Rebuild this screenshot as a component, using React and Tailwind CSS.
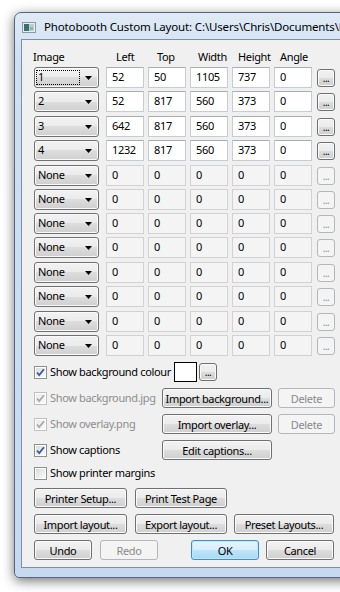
import React from "react";

const FONT = { fontFamily: '"Noto Sans", "Open Sans", Arial, sans-serif' };

function Btn({ children, className = "", disabled = false, def = false }) {
  let cls =
    "flex shrink-0 items-center justify-center whitespace-nowrap rounded-[3px] border text-[11px] leading-none ";
  if (def) {
    cls +=
      "border-[#3c8fd1] text-black bg-[linear-gradient(#e6f4fc_0%,#d7eefb_50%,#bfe4f8_50%,#a9d9f4_100%)] shadow-[inset_0_0_0_1px_#bfe6fb] ";
  } else if (disabled) {
    cls += "border-[#b3b7ba] text-[#8a8a8a] bg-[#f4f4f4] ";
  } else {
    cls +=
      "border-[#707070] text-black bg-[linear-gradient(#f2f2f2_0%,#ebebeb_50%,#dddddd_50%,#cfcfcf_100%)] shadow-[inset_0_0_0_1px_#fafafa] ";
  }
  return <div className={cls + className}>{children}</div>;
}

function Combo({ value, focus }) {
  return (
    <div className="relative flex h-[21px] w-[65px] shrink-0 items-center rounded-[3px] border border-[#707070] bg-[linear-gradient(#f2f2f2_0%,#ebebeb_50%,#dddddd_50%,#cfcfcf_100%)] shadow-[inset_0_0_0_1px_#fafafa] text-[11px]">
      {focus ? (
        <div className="ml-[1px] flex h-[15px] w-[44px] items-center border border-dotted border-black pl-[1px]">
          {value}
        </div>
      ) : (
        <div className="pl-[3px]">{value}</div>
      )}
      <svg className="absolute right-[6px] top-[8px]" width="7" height="4" viewBox="0 0 7 4">
        <path d="M0 0 H7 L3.5 4 Z" fill="#000" />
      </svg>
    </div>
  );
}

function Box({ v, disabled }) {
  return (
    <div
      className={
        "flex h-[21px] w-[38px] shrink-0 items-center border pl-[5px] text-[11px] " +
        (disabled
          ? "border-[#d2d2d2] bg-[#f4f4f4] text-black"
          : "border-[#c7cbd2] border-t-[#a9adb4] bg-white text-black")
      }
    >
      {v}
    </div>
  );
}

function Dots({ disabled }) {
  return (
    <Btn disabled={disabled} className="h-[18px] w-[18px] !items-end pb-[3px]">
      <span className="text-[10px] leading-none tracking-[-0.5px]">...</span>
    </Btn>
  );
}

function Check({ checked, disabled, label }) {
  return (
    <div className="flex items-center whitespace-nowrap">
      <svg className="shrink-0" width="13" height="13" viewBox="0 0 13 13">
        <defs>
          <linearGradient id={"cg" + (disabled ? "d" : "e")} x1="0" y1="0" x2="1" y2="1">
            <stop offset="0" stopColor={disabled ? "#ececec" : "#d8dbe0"} />
            <stop offset="1" stopColor={disabled ? "#f8f8f8" : "#fbfbfb"} />
          </linearGradient>
        </defs>
        <rect x="0.5" y="0.5" width="12" height="12" fill="#fff" stroke={disabled ? "#c0c0c0" : "#8e8f8f"} />
        <rect x="2" y="2" width="9" height="9" fill={"url(#cg" + (disabled ? "d" : "e") + ")"} />
        {checked && (
          <path
            d="M3 6.5 L5.2 9 L10 3.2"
            fill="none"
            stroke={disabled ? "#a8a8a8" : "#3a5a9b"}
            strokeWidth="1.8"
          />
        )}
      </svg>
      <span className={"ml-[3px] text-[11px] " + (disabled ? "text-[#8d8d8d]" : "text-black")}>
        {label}
      </span>
    </div>
  );
}

const rows = [
  ["1", "52", "50", "1105", "737", "0"],
  ["2", "52", "817", "560", "373", "0"],
  ["3", "642", "817", "560", "373", "0"],
  ["4", "1232", "817", "560", "373", "0"],
];
for (let i = 0; i < 8; i++) rows.push(["None", "0", "0", "0", "0", "0"]);
const gaps = [2, 3, 4, 3, 4, 3, 3, 3, 4, 3, 4, 3];

export default function App() {
  return (
    <div className="h-[592px] w-[340px] overflow-hidden bg-white tracking-[-0.35px]" style={FONT}>
      <div className="pl-[14px] pt-[12px]">
        <div className="flex h-[566px] w-[362px] flex-col rounded-t-[7px] rounded-b-[5px] border border-[#55667c] bg-[linear-gradient(#e0eaf6_0%,#cfe0f2_8%,#c6d9ef_100%)] shadow-[0_3px_12px_rgba(0,0,0,0.55)]">
          <div className="flex h-[26px] items-center pl-[7px] pt-[2px]">
            <svg className="shrink-0" width="14" height="11" viewBox="0 0 14 11">
              <rect x="0.5" y="0.5" width="13" height="10" fill="#e8eef0" stroke="#8a9aa0" />
              <rect x="2" y="2" width="5" height="7" fill="#3d6e73" />
              <rect x="7" y="2" width="5" height="7" fill="#b7d1c4" />
              <rect x="8" y="5" width="3" height="3" fill="#8fb6a2" />
            </svg>
            <span className="ml-[8px] whitespace-nowrap text-[11.5px] tracking-[-0.15px] text-black">
              Photobooth Custom Layout: C:\Users\Chris\Documents\Photobooth
            </span>
          </div>
          <div className="mx-[6px] mb-[9px] flex-1 border border-[#7d8fa5] bg-[#f0f0f0] pl-[11px] pt-[9px]">
            <div className="flex h-[16px] items-center text-[11px] text-black">
              <span className="w-[83px] shrink-0">Image</span>
              <span className="w-[41px] shrink-0">Left</span>
              <span className="w-[41px] shrink-0">Top</span>
              <span className="w-[40px] shrink-0">Width</span>
              <span className="w-[42px] shrink-0">Height</span>
              <span>Angle</span>
            </div>
            <div className="flex flex-col pl-[1px]">
              {rows.map((r, i) => {
                const dis = i >= 4;
                return (
                  <div
                    key={i}
                    className={"flex h-[21px] items-center " + (gaps[i] === 2 ? "mt-[2px]" : gaps[i] === 3 ? "mt-[3px]" : "mt-[4px]")}
                  >
                    <Combo value={r[0]} focus={i === 0} />
                    <div className="ml-[7px] flex gap-[4px]">
                      <Box v={r[1]} disabled={dis} />
                      <Box v={r[2]} disabled={dis} />
                      <Box v={r[3]} disabled={dis} />
                      <Box v={r[4]} disabled={dis} />
                      <Box v={r[5]} disabled={dis} />
                    </div>
                    <div className="ml-[5px]">
                      <Dots disabled={dis} />
                    </div>
                  </div>
                );
              })}

              <div className="mt-[6px] flex h-[20px] items-center">
                <div className="w-[140px] shrink-0">
                  <Check checked label="Show background colour" />
                </div>
                <div className="h-[20px] w-[23px] shrink-0 border border-black bg-white" />
                <div className="ml-[2px]">
                  <Dots />
                </div>
              </div>

              <div className="mt-[6px] flex h-[20px] items-center">
                <div className="w-[128px] shrink-0">
                  <Check checked disabled label="Show background.jpg" />
                </div>
                <Btn className="h-[20px] w-[110px]">Import background...</Btn>
                <Btn disabled className="ml-[6px] h-[20px] w-[57px]">Delete</Btn>
              </div>

              <div className="mt-[6px] flex h-[20px] items-center">
                <div className="w-[128px] shrink-0">
                  <Check checked disabled label="Show overlay.png" />
                </div>
                <Btn className="h-[20px] w-[110px]">Import overlay...</Btn>
                <Btn disabled className="ml-[6px] h-[20px] w-[57px]">Delete</Btn>
              </div>

              <div className="mt-[6px] flex h-[20px] items-center">
                <div className="w-[128px] shrink-0">
                  <Check checked label="Show captions" />
                </div>
                <Btn className="h-[20px] w-[110px]">Edit captions...</Btn>
              </div>

              <div className="mt-[5px] flex h-[16px] items-center">
                <Check label="Show printer margins" />
              </div>

              <div className="mt-[7px] flex h-[20px] items-center gap-[8px]">
                <Btn className="h-[20px] w-[93px]">Printer Setup...</Btn>
                <Btn className="h-[20px] w-[92px]">Print Test Page</Btn>
              </div>

              <div className="mt-[6px] flex h-[20px] items-center">
                <Btn className="h-[20px] w-[93px]">Import layout...</Btn>
                <Btn className="ml-[8px] h-[20px] w-[92px]">Export layout...</Btn>
                <Btn className="ml-[7px] h-[20px] w-[100px]">Preset Layouts...</Btn>
              </div>

              <div className="mt-[6px] flex h-[20px] items-center">
                <Btn className="h-[20px] w-[58px]">Undo</Btn>
                <Btn disabled className="ml-[8px] h-[20px] w-[58px]">Redo</Btn>
                <Btn def className="ml-[33px] h-[20px] w-[68px]">OK</Btn>
                <Btn className="ml-[7px] h-[20px] w-[68px]">Cancel</Btn>
              </div>
            </div>
          </div>
        </div>
      </div>
    </div>
  );
}
